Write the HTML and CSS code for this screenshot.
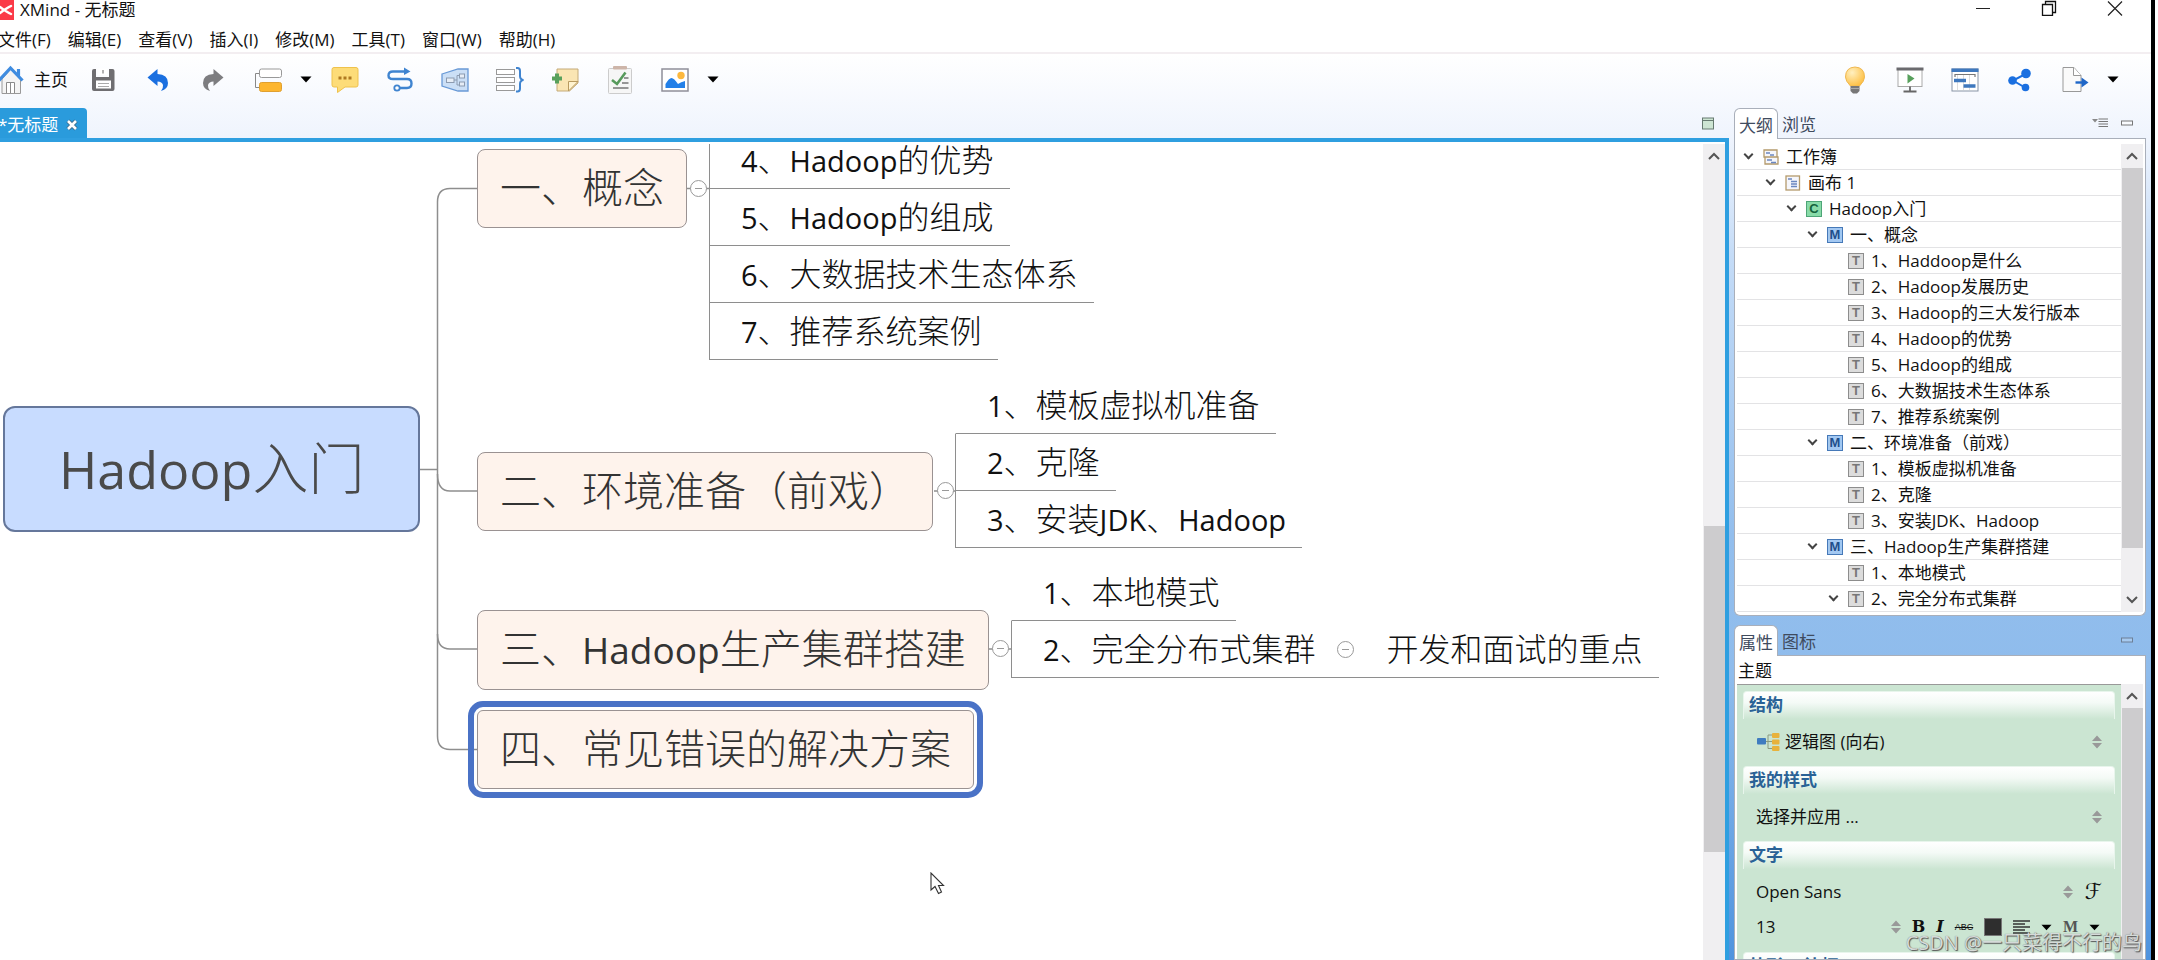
FILE: index.html
```html
<!DOCTYPE html>
<html lang="zh-CN">
<head>
<meta charset="utf-8">
<title>XMind - 无标题</title>
<link rel="stylesheet" href="styles.css">
</head>
<body>
<div class="window">
  <header class="titlebar">
    <svg class="app-icon" width="14" height="20" viewBox="0 0 14 20"><rect width="14" height="20" fill="#fb3a48"/><path d="M0 7L4 10L9 7M4 10L9 13M0 13L4 10M9 7L11 6M9 13L11 14" stroke="#fff" stroke-width="2.500" fill="none" stroke-linecap="round"/></svg>
    <h1 class="title">XMind - 无标题</h1>
    <div class="win-controls">
      <button aria-label="最小化"><svg width="16" height="16" viewBox="0 0 16 16"><path d="M1 8.500H15" stroke="#222" fill="none"/></svg></button>
      <button aria-label="还原"><svg width="16" height="16" viewBox="0 0 16 16"><path d="M1.500 4.500H11.500V15.500H1.500ZM4.500 4V1.500H14.500V12.500H12" stroke="#111" stroke-width="1.300" fill="none"/></svg></button>
      <button aria-label="关闭"><svg width="16" height="16" viewBox="0 0 16 16"><path d="M1 1.500L15 15.500M15 1.500L1 15.500" stroke="#222" stroke-width="1.200" fill="none"/></svg></button>
    </div>
  </header>

  <nav class="menubar">
    <button>文件(F)</button><button>编辑(E)</button><button>查看(V)</button><button>插入(I)</button><button>修改(M)</button><button>工具(T)</button><button>窗口(W)</button><button>帮助(H)</button>
  </nav>

  <div class="workbench">
    <div class="toolbar">
      <button class="home">
        <svg width="26" height="30" viewBox="0 0 26 30"><path d="M4 14V28.500H22.500V14L13 4Z" fill="#f4f4f4" stroke="#999"/><path d="M8.500 28V17.500H16.500V28M12.500 17.500V28" fill="#fff" stroke="#8a8a8a"/><path d="M1 15.500L12.500 3L24.500 15.500M20.500 11V4" fill="none" stroke="#3f8ce0" stroke-width="3.200"/></svg>
        主页
      </button>
      <button class="tool" aria-label="保存"><svg width="28" height="28" viewBox="0 0 28 28"><path d="M3 5V23Q3 25 5 25H23.500Q25.500 25 25.500 23V5Q25.500 3 23.500 3H20V11H7V3H5Q3 3 3 5Z" fill="#6f6e71"/><path d="M9 2.500H18V9H9Z" fill="#fff"/><path d="M14 4V7.500" stroke="#999" stroke-width="1.500"/><rect x="7" y="14.500" width="15" height="8" fill="#fff"/><path d="M9 17.500H20M9 20.500H20" stroke="#aaa"/></svg></button>
      <button class="tool" aria-label="撤销"><svg width="28" height="28" viewBox="0 0 28 28"><path d="M3.500 11.500L13.500 3V8Q24 8.500 24 17Q24 23 17 25Q19.500 21.500 19 19Q18 15.500 13.500 15.500V20Z" fill="#1a6fe0"/></svg></button>
      <button class="tool" aria-label="重做"><svg width="28" height="28" viewBox="0 0 28 28"><path d="M24.500 11.500L14.500 3V8Q4 8.500 4 17Q4 23 11 25Q8.500 21.500 9 19Q10 15.500 14.500 15.500V20Z" fill="#7d7d80"/></svg></button>
      <button class="tool" aria-label="插入主题"><svg width="28" height="28" viewBox="0 0 28 28"><path d="M6 7.500H1.500V21.500H6" fill="none" stroke="#888"/><rect x="5.500" y="3" width="22" height="8.500" rx="2" fill="#fff" stroke="#999"/><rect x="5.500" y="16.500" width="22" height="9" rx="2" fill="#fdb62f" stroke="#e0a030"/></svg></button>
      <button class="caret" aria-label="更多主题"><svg width="12" height="7" viewBox="0 0 12 7"><path d="M0.500 0.500H11.500L6 6.500Z"/></svg></button>
      <button class="tool" aria-label="批注"><svg width="28" height="28" viewBox="0 0 28 28"><path d="M3 1.500H25Q27 1.500 27 3.500V19Q27 21 25 21H14L6.500 26.500V21H3Q1 21 1 19V3.500Q1 1.500 3 1.500Z" fill="#fddc78" stroke="#efc24c"/><g fill="#b07a20"><rect x="7.500" y="10.500" width="3" height="3"/><rect x="12.500" y="10.500" width="3" height="3"/><rect x="17.500" y="10.500" width="3" height="3"/></g></svg></button>
      <button class="tool" aria-label="联系"><svg width="28" height="28" viewBox="0 0 28 28"><path d="M19 5.500H7Q2.500 5.500 2.500 9.500Q2.500 13 7 13H21Q25.500 13 25.500 17.500Q25.500 22 21 22H13" fill="none" stroke="#3f84d0" stroke-width="2.400"/><path d="M18 1.500L24.500 5.500L18 9Z" fill="#3f84d0"/><circle cx="11" cy="22" r="2.700" fill="#fff" stroke="#3f84d0" stroke-width="1.800"/></svg></button>
      <button class="tool" aria-label="外框"><svg width="28" height="28" viewBox="0 0 28 28"><path d="M1 8L17 3H27V25H17L1 20Z" fill="#cbdff6" stroke="#6899d6" stroke-width="1.300"/><g fill="#e6edf6" stroke="#8c9bb0"><rect x="5.500" y="12" width="7.500" height="4.500"/><path d="M13 14H16M19 9.500H16V19H19" fill="none"/><rect x="18.500" y="8" width="5" height="4"/><rect x="18.500" y="16" width="5" height="4"/></g></svg></button>
      <button class="tool" aria-label="概要"><svg width="28" height="28" viewBox="0 0 28 28"><g fill="#fff" stroke="#999"><rect x=".5" y="3.500" width="18" height="5"/><rect x=".5" y="11.500" width="18" height="5"/><rect x=".5" y="19.500" width="18" height="5"/></g><path d="M20 2H21.500Q24 2 24 5V10Q24 13.500 27.500 14Q24 14.500 24 18V22.500Q24 25.500 21.500 25.500H20" fill="none" stroke="#3f84d0" stroke-width="2"/></svg></button>
      <button class="tool" aria-label="备注"><svg width="28" height="28" viewBox="0 0 28 28"><path d="M6 3H27V17L18.500 25H6Z" fill="#fae5b3" stroke="#c4aa78"/><path d="M27 15.500H17.500V25Z" fill="#fff3cf" stroke="#b89a60"/><path d="M6 7.500V17.500M1 12.500H11" stroke="#58a05c" stroke-width="4"/></svg></button>
      <button class="tool" aria-label="任务"><svg width="28" height="30" viewBox="0 0 28 30"><rect x="2.500" y="3.500" width="23" height="25" rx="1" fill="#f6f6f6" stroke="#ccc"/><rect x="7" y="1" width="14" height="3.500" rx="1" fill="#cdb5a9"/><path d="M6 15L11 19L19.500 7.500" fill="none" stroke="#579a5c" stroke-width="2.600"/><path d="M18 13H22.500M16 18H22.500M7 23H22.500" stroke="#777" stroke-width="1.600"/></svg></button>
      <button class="tool" aria-label="图片"><svg width="28" height="28" viewBox="0 0 28 28"><rect x="1" y="3" width="26" height="22" fill="#fff" stroke="#8f8f99" stroke-width="1.500"/><circle cx="20" cy="9.500" r="3.700" fill="#fdb83d"/><path d="M4.500 22V18Q8 12 10.500 12Q13 12 17 18Q20 16 24 15V22Z" fill="#2380e8"/></svg></button>
      <button class="caret" aria-label="更多插入"><svg width="12" height="7" viewBox="0 0 12 7"><path d="M0.500 0.500H11.500L6 6.500Z"/></svg></button>
      <span class="spacer"></span>
      <button class="tool" aria-label="头脑风暴"><svg width="28" height="30" viewBox="0 0 28 30"><defs><radialGradient id="glow" cx=".35" cy=".3" r=".8"><stop offset="0" stop-color="#fff0c0"/><stop offset="1" stop-color="#fdbb38"/></radialGradient></defs><path d="M14 2Q23.500 2.500 23.500 12Q23.500 16 18.500 21H9.500Q4.500 16 4.500 12Q4.500 2.500 14 2Z" fill="url(#glow)" stroke="#f0b850"/><path d="M9.500 21H18.500V26L16 28.500H12L9.500 26Z" fill="#777"/><path d="M9.500 23.500H18.500" stroke="#aaa"/></svg></button>
      <button class="tool" aria-label="演示"><svg width="28" height="28" viewBox="0 0 28 28"><rect x="2" y="3" width="24" height="17.500" fill="#fff" stroke="#aaa"/><rect x=".5" y="1.500" width="27" height="3" fill="#6a6a6e"/><path d="M11.500 8V17.500L18.500 12.500Z" fill="#57a05c"/><path d="M14 20.500V25M7.500 25.500H20.500" stroke="#666" stroke-width="1.800"/></svg></button>
      <button class="tool" aria-label="甘特图"><svg width="28" height="28" viewBox="0 0 28 28"><rect x="1" y="3" width="26" height="22" fill="#fff" stroke="#8794a5"/><rect x=".5" y="2.500" width="27" height="3.500" fill="#3e78be"/><path d="M6.500 8V24M12.500 8V24M18.500 8V24" stroke="#ddd"/><path d="M4 11V8.500H24V11" fill="none" stroke="#777" stroke-width="1.200"/><path d="M3 14.500H15M12.500 20H24.500" stroke="#3e78be" stroke-width="3.400"/></svg></button>
      <button class="tool" aria-label="分享"><svg width="28" height="28" viewBox="0 0 28 28"><path d="M19.500 8L7 14.500L19 21.500" fill="none" stroke="#1a6fe0" stroke-width="2"/><g fill="#1a6fe0"><circle cx="20" cy="7.500" r="4.800"/><circle cx="6.500" cy="14.500" r="4.300"/><circle cx="19.500" cy="21.500" r="3.800"/></g></svg></button>
      <button class="tool" aria-label="导出"><svg width="28" height="28" viewBox="0 0 28 28"><path d="M2 1.500H13L20 9.500V25.500H2Z" fill="#fafafa" stroke="#999"/><path d="M12.500 1.500V9.500H20" fill="#fff" stroke="#999"/><path d="M14.500 16.500H22" stroke="#1e66c8" stroke-width="2.400"/><path d="M20.500 11.500L27.500 16.500L20.500 21.500Z" fill="#1e66c8"/></svg></button>
      <button class="caret" aria-label="更多导出"><svg width="12" height="7" viewBox="0 0 12 7"><path d="M0.500 0.500H11.500L6 6.500Z"/></svg></button>
    </div>

    <div class="columns">
      <main class="editor">
        <div class="editor-tabs">
          <button class="editor-tab">*无标题 <svg width="12" height="12" viewBox="0 0 12 12"><path d="M2 2L10 10M10 2L2 10" stroke="#3d6b8c" stroke-width="4.500"/><path d="M2 2L10 10M10 2L2 10" stroke="#fff" stroke-width="2.600"/></svg></button>
          <button class="icon-button" aria-label="最大化"><svg width="12" height="13" viewBox="0 0 12 13"><rect x=".5" y="1" width="11" height="11" fill="#cde5d3" stroke="#667a70"/><path d="M1 3.500H11" stroke="#667a70"/></svg></button>
        </div>
        <div class="editor-body">
          <div class="canvas">
            <svg class="links" width="1703" height="816" viewBox="0 0 1703 816">
              <g fill="none" stroke="#8e8e8e" stroke-width="1.500">
                <path d="M420 325.500H437"/>
                <path d="M478 44.500H450Q437.500 44.500 437.500 58V592Q437.500 605.500 450 605.500H478"/>
                <path d="M437.500 330Q437.500 347 450 347H478"/>
                <path d="M437.500 490Q437.500 505 450 505H478"/>
                <path d="M687 44.500H710M934 347H956M989 505H1012"/>
              </g>
            </svg>

            <div class="node root" style="left:3px;top:262px"><span class="latin">Hadoop</span>入门</div>
            <div class="node topic" style="left:477px;top:5px">一、概念</div>
            <div class="node topic" style="left:477px;top:308px">二、环境准备（前戏）</div>
            <div class="node topic" style="left:477px;top:466px">三、<span class="latin">Hadoop</span>生产集群搭建</div>
            <div class="node topic selected" style="left:477px;top:566px">四、常见错误的解决方案</div>

            <ul class="node subtopics continued" style="left:709px;top:-12px">
              <li><span class="latin">4</span>、<span class="latin">Hadoop</span>的优势</li>
              <li><span class="latin">5</span>、<span class="latin">Hadoop</span>的组成</li>
              <li><span class="latin">6</span>、大数据技术生态体系</li>
              <li><span class="latin">7</span>、推荐系统案例</li>
            </ul>
            <ul class="node subtopics" style="left:955px;top:233px">
              <li><span class="latin">1</span>、模板虚拟机准备</li>
              <li><span class="latin">2</span>、克隆</li>
              <li><span class="latin">3</span>、安装<span class="latin">JDK</span>、<span class="latin">Hadoop</span></li>
            </ul>
            <ul class="node subtopics" style="left:1011px;top:420px">
              <li><span class="latin">1</span>、本地模式</li>
              <li><span class="latin">2</span>、完全分布式集群 <button class="fold" aria-label="折叠"></button> 开发和面试的重点</li>
            </ul>

            <button class="node fold" aria-label="折叠" style="left:690px;top:36px"></button>
            <button class="node fold" aria-label="折叠" style="left:937px;top:338px"></button>
            <button class="node fold" aria-label="折叠" style="left:992px;top:496px"></button>

            <svg class="node" style="left:930px;top:728px" width="15" height="23" viewBox="0 0 15 23"><path d="M1 1V18L5 14.500L8.500 21.500L11.500 20L8.500 13.500H13.500Z" fill="#fff" stroke="#333" stroke-width="1.100"/></svg>
          </div>
          <div class="scrollbar editor-scroll">
            <svg width="12" height="8" viewBox="0 0 12 8"><path d="M1 7L6 2L11 7" fill="none" stroke="#555" stroke-width="2"/></svg>
            <div class="thumb"></div>
          </div>
        </div>
      </main>

      <aside class="side">
        <section class="view outline">
          <div class="view-tabs">
            <button class="view-tab active">大纲</button><button class="view-tab">浏览</button>
            <span class="spacer"></span>
            <button class="icon-button" aria-label="视图菜单"><svg width="16" height="10" viewBox="0 0 16 10"><path d="M0 1H6L3 4.500Z" fill="#888"/><path d="M6.500 1H16M6.500 3.500H16M6.500 6H16M6.500 8.500H16" stroke="#777"/></svg></button>
            <button class="icon-button" aria-label="最小化视图"><svg width="12" height="10" viewBox="0 0 12 10"><rect x=".5" y="3" width="11" height="4" fill="#fff" fill-opacity=".5" stroke="#777"/></svg></button>
          </div>
          <div class="view-body">
            <ul class="tree">
              <li class="l0"><i class="arrow"></i><svg width="16" height="16" viewBox="0 0 16 16"><path d="M1 1H14V8H1ZM2 8H15V15H2Z" fill="#f5f6fb" stroke="#b49a6c" stroke-width="1.300"/><path d="M3 4H7M7 6H11M4 11H9M8 13.500H13" stroke="#6b87c0" stroke-width="1.400"/></svg>工作簿</li>
              <li class="l1"><i class="arrow"></i><svg width="16" height="16" viewBox="0 0 16 16"><rect x="1" y="1" width="13.500" height="14" fill="#f5f6fb" stroke="#b49a6c" stroke-width="1.300"/><path d="M3 4H7M6 6.500H12M6 9H12M6 11.500H12" stroke="#6b87c0" stroke-width="1.300"/></svg>画布 1</li>
              <li class="l2"><i class="arrow"></i><b class="tag central">C</b>Hadoop入门</li>
              <li class="l3"><i class="arrow"></i><b class="tag main">M</b>一、概念</li>
              <li class="l4"><b class="tag">T</b>1、Haddoop是什么</li>
              <li class="l4"><b class="tag">T</b>2、Hadoop发展历史</li>
              <li class="l4"><b class="tag">T</b>3、Hadoop的三大发行版本</li>
              <li class="l4"><b class="tag">T</b>4、Hadoop的优势</li>
              <li class="l4"><b class="tag">T</b>5、Hadoop的组成</li>
              <li class="l4"><b class="tag">T</b>6、大数据技术生态体系</li>
              <li class="l4"><b class="tag">T</b>7、推荐系统案例</li>
              <li class="l3"><i class="arrow"></i><b class="tag main">M</b>二、环境准备（前戏）</li>
              <li class="l4"><b class="tag">T</b>1、模板虚拟机准备</li>
              <li class="l4"><b class="tag">T</b>2、克隆</li>
              <li class="l4"><b class="tag">T</b>3、安装JDK、Hadoop</li>
              <li class="l3"><i class="arrow"></i><b class="tag main">M</b>三、Hadoop生产集群搭建</li>
              <li class="l4"><b class="tag">T</b>1、本地模式</li>
              <li class="l4"><i class="arrow"></i><b class="tag">T</b>2、完全分布式集群</li>
            </ul>
            <div class="scrollbar outline-scroll">
              <svg width="12" height="8" viewBox="0 0 12 8"><path d="M1 7L6 2L11 7" fill="none" stroke="#555" stroke-width="2"/></svg>
              <div class="thumb"></div>
              <svg width="12" height="8" viewBox="0 0 12 8"><path d="M1 1L6 6L11 1" fill="none" stroke="#555" stroke-width="2"/></svg>
            </div>
          </div>
        </section>

        <section class="view properties">
          <div class="view-tabs">
            <button class="view-tab active">属性</button><button class="view-tab">图标</button>
            <span class="spacer"></span>
            <button class="icon-button" aria-label="最小化视图"><svg width="12" height="10" viewBox="0 0 12 10"><rect x=".5" y="3" width="11" height="4" fill="#fff" fill-opacity=".2" stroke="#6c7f96"/></svg></button>
          </div>
          <h2 class="subject">主题</h2>
          <div class="view-body">
            <div class="form">
              <h3>结构</h3>
              <div class="field">
                <svg width="24" height="20" viewBox="0 0 24 20"><path d="M9 9.500H16M17 3H12V16.500H17" fill="none" stroke="#8a9a80"/><rect x="1" y="6" width="9" height="6.500" rx="1" fill="#3f7cc0"/><g fill="#e8b23c"><rect x="16" y="1" width="7.500" height="5" rx="1"/><rect x="16" y="7.500" width="7.500" height="5" rx="1"/><rect x="16" y="14" width="7.500" height="5" rx="1"/></g></svg>
                <select aria-label="结构"><option>逻辑图 (向右)</option></select>
                <svg class="updown" width="10" height="14" viewBox="0 0 10 14"><path d="M0 6L5 0.500L10 6ZM0 8L5 13.500L10 8Z"/></svg>
              </div>
              <h3>我的样式</h3>
              <div class="field">
                <select aria-label="我的样式"><option>选择并应用 ...</option></select>
                <svg class="updown" width="10" height="14" viewBox="0 0 10 14"><path d="M0 6L5 0.500L10 6ZM0 8L5 13.500L10 8Z"/></svg>
              </div>
              <h3>文字</h3>
              <div class="field">
                <select aria-label="字体"><option>Open Sans</option></select>
                <svg class="updown" width="10" height="14" viewBox="0 0 10 14"><path d="M0 6L5 0.500L10 6ZM0 8L5 13.500L10 8Z"/></svg>
                <button class="font-dialog" aria-label="字体设置">ℱ</button>
              </div>
              <div class="field text-style">
                <select aria-label="字号"><option>13</option></select>
                <svg class="updown" width="10" height="14" viewBox="0 0 10 14"><path d="M0 6L5 0.500L10 6ZM0 8L5 13.500L10 8Z"/></svg>
                <button class="bold">B</button>
                <button class="italic">I</button>
                <button class="strike">ABC</button>
                <button aria-label="文字颜色" class="swatch"></button>
                <button aria-label="对齐"><svg width="17" height="14" viewBox="0 0 17 14"><path d="M0 1H17M0 4H12M0 7H17M0 10H12M0 13H17" stroke="#333" stroke-width="1.300"/></svg></button>
                <button aria-label="对齐选项"><svg width="11" height="7" viewBox="0 0 12 7"><path d="M0.500 0.500H11.500L6 6.500Z"/></svg></button>
                <button class="letter-case">M</button>
                <button aria-label="大小写选项"><svg width="11" height="7" viewBox="0 0 12 7"><path d="M0.500 0.500H11.500L6 6.500Z"/></svg></button>
              </div>
              <h3>外形 &amp; 边框</h3>
            </div>
            <div class="scrollbar form-scroll">
              <svg width="12" height="8" viewBox="0 0 12 8"><path d="M1 7L6 2L11 7" fill="none" stroke="#555" stroke-width="2"/></svg>
              <div class="thumb"></div>
            </div>
          </div>
        </section>
      </aside>
    </div>
  </div>
  <div class="watermark">CSDN @一只菜得不行的鸟</div>
</div>
</body>
</html>
```

FILE: styles.css
```css
* { box-sizing: border-box; }

body {
  margin: 0;
  background: #fff;
  color: #111;
  font: 17px/24px "Open Sans", "Noto Sans CJK SC", sans-serif;
}

button, select {
  margin: 0;
  padding: 0;
  border: 0;
  background: none;
  color: inherit;
  font: inherit;
  appearance: none;
}

ul { margin: 0; padding: 0; list-style: none; }
h1, h2, h3 { margin: 0; font: inherit; }
svg { display: block; flex: none; }
.spacer { flex: 1; }

.window {
  position: relative;
  display: flex;
  flex-direction: column;
  height: 100vh;
  margin-right: 3px;
  border-right: 4px solid #000;
  overflow: hidden;
  background: #fff;
}

/* Title and menu */
.titlebar { display: flex; align-items: flex-start; height: 28px; }
.title { flex: 1; padding-left: 6px; line-height: 19px; }
.win-controls { display: flex; gap: 50px; padding: 0 28px 0 0; }
.menubar { display: flex; gap: 17px; height: 26px; margin-left: -2px; border-bottom: 2px solid #f3eef1; white-space: nowrap; }

.workbench {
  flex: 1;
  display: flex;
  flex-direction: column;
  min-height: 0;
  background: linear-gradient(#fff 0, #eff4fd 84px, #c5dcf7 200px, #93beed 480px, #8fbcec 620px, #4f93de 906px);
}

/* Toolbar */
.toolbar { display: flex; align-items: center; flex: none; height: 53px; padding: 0 27px 2px 0; }
.home { display: flex; align-items: center; gap: 10px; width: 75px; white-space: nowrap; }
.home svg { margin-left: -2px; }
.tool { display: flex; justify-content: center; flex: none; width: 55px; }
.caret { display: flex; justify-content: center; flex: none; width: 22px; }

.columns { flex: 1; display: flex; min-height: 0; }

/* Editor */
.editor { flex: 1; display: flex; flex-direction: column; min-width: 0; }
.editor-tabs { display: flex; align-items: flex-end; justify-content: space-between; flex: none; height: 31px; padding-right: 15px; }
.editor-tab { display: flex; align-items: center; gap: 8px; height: 30px; margin-left: -2px; padding: 3px 9px 0 0; border-radius: 0 4px 0 0; background: #2a9bdc; color: #fff; }
.icon-button { display: flex; align-items: center; height: 30px; }
.editor-body { flex: 1; display: flex; min-height: 0; padding-top: 2px; border-top: 4px solid #2f9fe0; border-right: 4px solid #2f9fe0; background: #fff; }
.canvas { flex: 1; position: relative; min-width: 0; overflow: hidden; }

.scrollbar { display: flex; flex-direction: column; align-items: center; flex: none; width: 22px; padding-top: 8px; background: #f0eff1; }
.thumb { width: 21px; background: #cdccce; }
.editor-scroll .thumb { height: 326px; margin-top: 366px; }

/* Mind map */
.links { position: absolute; left: 0; top: 0; }
.node { position: absolute; white-space: nowrap; }
.root, .topic, .subtopics { font-family: "Open Sans", "Noto Sans CJK SC Light", "Noto Sans CJK SC", sans-serif; }
.root { padding: 0 54px 2px; border: 2px solid #65779b; border-radius: 12px; background: #c8dcff; color: #4a4a4a; font-size: 56px; line-height: 118px; }
.root .latin { font-size: 52px; }
.topic { padding: 0 22px 2px; border: 1px solid #9a9292; border-radius: 8px; background: #fef3ec; color: #333; font-size: 41px; line-height: 75px; }
.topic .latin { font-size: 37px; }
.selected { outline: 6px solid #4a72c6; outline-offset: 3px; border-radius: 6px; }
.subtopics { display: flex; flex-direction: column; align-items: flex-start; color: #111; font-size: 32px; line-height: 56px; }
.subtopics .latin { font-size: 29px; }
.subtopics li { display: flex; align-items: baseline; height: 57px; padding: 0 16px 0 31px; border-bottom: 1px solid #8e8e8e; border-left: 1px solid #8e8e8e; }
.subtopics:not(.continued) li:first-child { border-left-color: transparent; }
.fold { width: 17px; height: 17px; border: 1px solid #999; border-radius: 50%; background: linear-gradient(#999, #999) center / 7px 1px no-repeat #fff; }
li .fold { align-self: center; margin: 0 33px 0 21px; }

/* Side views */
.side { display: flex; flex-direction: column; flex: none; width: 422px; padding: 0 5px 0 5px; }
.view { display: flex; flex-direction: column; }
.outline { flex: none; }
.properties { flex: 1; min-height: 0; margin-top: 8px; }
.view-tabs { display: flex; align-items: flex-end; flex: none; height: 32px; padding-right: 13px; border-bottom: 1px solid #a9afba; color: #3f4b5e; }
.view-tabs .icon-button + .icon-button { margin-left: 13px; }
.view-tab { height: 30px; padding: 4px 4px 0; }
.view-tab.active { margin-bottom: -1px; height: 31px; border: 1px solid #a9afba; border-bottom: 0; border-radius: 6px 6px 0 0; background: #fff; }
.view-body { display: flex; flex: 1; min-height: 0; padding: 5px 2px 3px; border: 1px solid #a9afba; border-top: 0; border-radius: 0 0 6px 6px; background: #fff; }
.tree { flex: 1; min-width: 0; }
.tree li { display: flex; align-items: center; gap: 7px; height: 26px; border-bottom: 1px solid #e3e3e5; white-space: nowrap; }
.l0 { padding-left: 26px; }
.l1 { padding-left: 48px; }
.l2 { padding-left: 69px; }
.l3 { padding-left: 90px; }
.l4 { padding-left: 111px; }
.arrow { flex: none; width: 7px; height: 7px; margin: -4px 4px 0 -18px; border: solid #444; border-width: 0 2px 2px 0; transform: rotate(45deg); }
.tag { flex: none; width: 16px; height: 16px; border: 1px solid #8d8d8d; background: #dcdcdc; color: #777; font: bold 13px/14px "Liberation Sans", sans-serif; text-align: center; }
.tag.central { border-color: #4ea577; background: #88dba8; color: #14643e; }
.tag.main { border-color: #4679b8; background: #a3c8f2; color: #1f4f8c; }
.outline-scroll { justify-content: space-between; padding-bottom: 8px; }
.outline-scroll .thumb { flex: 1; margin: 8px 0 48px; }

.subject { flex: none; height: 28px; padding: 3px 3px 0; border: solid #a9afba; border-width: 0 1px; background: #fff; }
.properties .view-body { padding: 0 2px; border-radius: 0; }
.form { flex: 1; min-width: 0; padding: 6px 6px 0; border-top: 1px solid #999; background: #cbe5d2; overflow: hidden; }
.form h3 { height: 28px; padding: 0 5px; border: 1px solid #e8f5ec; border-bottom: 0; border-radius: 4px 4px 0 0; background: linear-gradient(#fff, #f4faf6 40%, #cbe5d2); color: #2a6296; font-weight: bold; line-height: 26px; }
.field { display: flex; align-items: center; height: 47px; padding: 0 13px 2px; }
.field select { flex: 1; min-width: 0; }
.field svg + select { margin-left: 5px; }
.updown { fill: #999; }
.font-dialog { margin-left: 12px; font: 22px/24px "DejaVu Sans", sans-serif; }
.text-style { justify-content: space-between; height: 24px; margin-bottom: 12px; padding-right: 15px; }
.text-style select { flex: none; width: 124px; }
.bold { font: 900 16px/20px "DejaVu Serif", serif; }
.italic { font: italic bold 16px/20px "DejaVu Serif", serif; }
.strike { font: 9px/20px "Liberation Sans", sans-serif; text-decoration: line-through; }
.swatch { width: 18px; height: 18px; border: 1px solid #777; background: #2e2e2e; }
.letter-case { color: #555; font: bold 16px/20px "Liberation Serif", serif; }
.form-scroll .thumb { flex: 1; margin-top: 8px; }

.watermark { position: absolute; right: 9px; bottom: 4px; color: #d5dad8; font-size: 20px; line-height: 26px; text-shadow: 1px 1px 1px #555, 0 0 1px #777; }
```
